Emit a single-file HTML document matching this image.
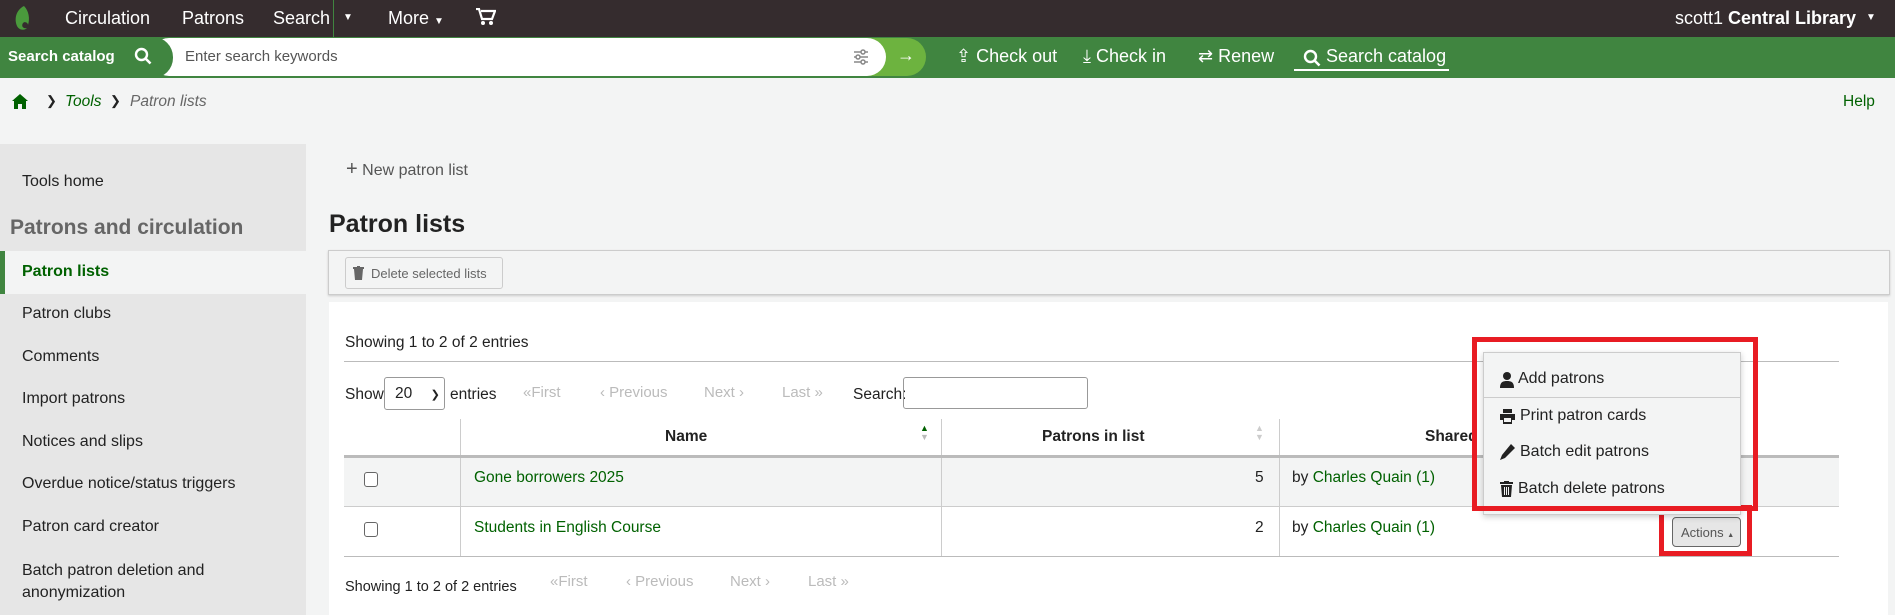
<!DOCTYPE html>
<html><head><meta charset="utf-8"><style>
*{box-sizing:border-box;margin:0;padding:0}
body{width:1895px;height:615px;overflow:hidden;background:#f3f4f4;font-family:"Liberation Sans",sans-serif;color:#222;position:relative;font-size:15.5px}
.a{position:absolute;white-space:nowrap}
.top{left:0;top:0;width:1895px;height:37px;background:#352c2e;color:#fff;font-size:18px}
.gb{left:0;top:37px;width:1895px;height:41px;background:#408540;color:#fff}
.g{color:#006100}
.side{left:0;top:144px;width:306px;height:471px;background:#e6e6e6}
.si{left:22px;font-size:16px;color:#222}
.gray{color:#bbb;font-size:15px}
</style></head><body>
<div class="a top">
 <svg class="a" style="left:12px;top:5px" width="20" height="26" viewBox="0 0 20 26"><path d="M12 1C4 5 2 14 5 21c2 4 7 5 10 2-4 1-6-2-4-5 2-2 5 0 5 2 2-6 1-14-4-19z" fill="#4a9a3c"/></svg>
 <span class="a" style="left:65px;top:8px">Circulation</span>
 <span class="a" style="left:182px;top:8px">Patrons</span>
 <span class="a" style="left:273px;top:8px">Search</span>
 <div class="a" style="left:333px;top:0;width:1px;height:37px;background:#408540"></div>
 <span class="a" style="left:343px;top:12px;font-size:10px">▼</span>
 <span class="a" style="left:388px;top:8px">More <span style="font-size:10px">▼</span></span>
 <svg class="a" style="left:476px;top:8px" width="20" height="18" viewBox="0 0 20 18"><path d="M0 1h3l3 10h10l3-8H5" fill="none" stroke="#fff" stroke-width="2.2"/><circle cx="7" cy="15" r="2" fill="#fff"/><circle cx="15" cy="15" r="2" fill="#fff"/></svg>
 <span class="a" style="left:1675px;top:8px">scott1 <b>Central Library</b></span>
 <span class="a" style="left:1866px;top:12px;font-size:10px">▼</span>
</div>
<div class="a gb">
 <div class="a" style="left:860px;top:1px;width:66px;height:38px;background:#6db33f;border-radius:0 19px 19px 0"></div>
 <div class="a" style="left:150px;top:1px;width:736px;height:38px;background:#fff;border-radius:19px"></div>
 <div class="a" style="left:0;top:0;width:173px;height:41px;background:#408540;border-radius:0 20px 20px 0"></div>
 <span class="a" style="left:8px;top:11px;font-weight:bold;font-size:15px">Search catalog</span>
 <svg class="a" style="left:134px;top:10px" width="18" height="18" viewBox="0 0 18 18"><circle cx="7.5" cy="7.5" r="5.5" fill="none" stroke="#fff" stroke-width="2.4"/><path d="M11.5 11.5l5 5" stroke="#fff" stroke-width="2.6"/></svg>
 <span class="a" style="left:185px;top:11px;color:#555;font-size:15px">Enter search keywords</span>
 <svg class="a" style="left:853px;top:12px" width="16" height="16" viewBox="0 0 16 16" stroke="#888" stroke-width="1.5"><path d="M1 3h14M1 8h14M1 13h14"/><circle cx="10" cy="3" r="2" fill="#fff"/><circle cx="5" cy="8" r="2" fill="#fff"/><circle cx="10" cy="13" r="2" fill="#fff"/></svg>
 <span class="a" style="left:897px;top:8px;font-size:18px;font-weight:bold">→</span>
 <span class="a" style="left:956px;top:9px;font-size:18px">⇪ Check out</span>
 <span class="a" style="left:1083px;top:9px;font-size:18px">⤓ Check in</span>
 <span class="a" style="left:1198px;top:9px;font-size:18px">⇄ Renew</span>
 <svg class="a" style="left:1303px;top:12px" width="18" height="18" viewBox="0 0 18 18"><circle cx="7.5" cy="7.5" r="5.5" fill="none" stroke="#fff" stroke-width="2.4"/><path d="M11.5 11.5l5 5" stroke="#fff" stroke-width="2.6"/></svg>
 <span class="a" style="left:1326px;top:9px;font-size:18px">Search catalog</span>
 <div class="a" style="left:1294px;top:32px;width:155px;height:2px;background:#fff"></div>
</div>
<svg class="a" style="left:12px;top:94px" width="16" height="15" viewBox="0 0 16 15"><path d="M8 0L0 7h2v8h4v-5h4v5h4V7h2z" fill="#006100"/></svg>
<span class="a" style="left:46px;top:93px;font-size:13px">❯</span>
<span class="a g" style="left:65px;top:93px;font-style:italic">Tools</span>
<span class="a" style="left:110px;top:93px;font-size:13px">❯</span>
<span class="a" style="left:130px;top:93px;font-style:italic;color:#666">Patron lists</span>
<span class="a g" style="left:1843px;top:93px">Help</span>

<div class="a side"></div>
<span class="a si" style="top:173px">Tools home</span>
<span class="a" style="left:10px;top:216px;font-size:21px;font-weight:bold;color:#666">Patrons and circulation</span>
<div class="a" style="left:0;top:251px;width:306px;height:43px;background:#f3f4f4;border-left:5px solid #408540"></div>
<span class="a si" style="top:263px;font-weight:bold;color:#006100">Patron lists</span>
<span class="a si" style="top:305px">Patron clubs</span>
<span class="a si" style="top:348px">Comments</span>
<span class="a si" style="top:390px">Import patrons</span>
<span class="a si" style="top:433px">Notices and slips</span>
<span class="a si" style="top:475px">Overdue notice/status triggers</span>
<span class="a si" style="top:518px">Patron card creator</span>
<span class="a si" style="top:560px;line-height:22px">Batch patron deletion and<br>anonymization</span>

<span class="a" style="left:346px;top:161px;font-size:16px;color:#555"><span style="font-size:20px;line-height:16px">+</span> New patron list</span>
<span class="a" style="left:329px;top:210px;font-size:25px;font-weight:bold">Patron lists</span>
<div class="a" style="left:328px;top:250px;width:1562px;height:45px;background:#f3f4f4;border:1px solid #ccc;box-shadow:0 1px 2px #ccc"></div>
<div class="a" style="left:345px;top:257px;width:158px;height:32px;border:1px solid #ccc;border-radius:3px;color:#666;font-size:13px;padding:8px 0 0 25px">Delete selected lists</div>
<svg class="a" style="left:353px;top:266px" width="11" height="14" viewBox="0 0 11 14"><path d="M0 1h11v2H0zM4 0h3v1H4zM1 3h9l-1 11H2z" fill="#666"/></svg>

<div class="a" style="left:329px;top:302px;width:1559px;height:313px;background:#fff"></div>
<span class="a" style="left:345px;top:334px">Showing 1 to 2 of 2 entries</span>
<div class="a" style="left:344px;top:361px;width:1495px;height:1px;background:#bbb"></div>
<span class="a" style="left:345px;top:386px">Show</span>
<div class="a" style="left:384px;top:377px;width:61px;height:33px;border:1px solid #999;border-radius:3px;padding:7px 0 0 10px">20 <span style="margin-left:14px;font-size:11px">❯</span></div>
<span class="a" style="left:450px;top:386px">entries</span>
<span class="a gray" style="left:523px;top:384px">«First</span>
<span class="a gray" style="left:600px;top:384px">‹ Previous</span>
<span class="a gray" style="left:704px;top:384px">Next ›</span>
<span class="a gray" style="left:782px;top:384px">Last »</span>
<span class="a" style="left:853px;top:386px">Search:</span>
<div class="a" style="left:903px;top:377px;width:185px;height:32px;border:1px solid #999;border-radius:3px"></div>

<div class="a" style="left:460px;top:419px;width:1px;height:138px;background:#ccc"></div>
<div class="a" style="left:941px;top:419px;width:1px;height:138px;background:#ccc"></div>
<div class="a" style="left:1279px;top:419px;width:1px;height:138px;background:#ccc"></div>
<span class="a" style="left:665px;top:428px;font-weight:bold">Name</span>
<span class="a" style="left:920px;top:424px;font-size:9px;line-height:9px;color:#006100">▲<br><span style="color:#bbb">▼</span></span>
<span class="a" style="left:1042px;top:428px;font-weight:bold">Patrons in list</span>
<span class="a" style="left:1255px;top:424px;font-size:9px;line-height:9px;color:#ccc">▲<br>▼</span>
<span class="a" style="left:1425px;top:428px;font-weight:bold">Shared</span>
<div class="a" style="left:344px;top:455px;width:1495px;height:3px;background:#bbb"></div>
<div class="a" style="left:344px;top:458px;width:1495px;height:48px;background:#f3f4f4"></div>
<div class="a" style="left:460px;top:458px;width:1px;height:99px;background:#ccc"></div>
<div class="a" style="left:941px;top:458px;width:1px;height:99px;background:#ccc"></div>
<div class="a" style="left:1279px;top:458px;width:1px;height:99px;background:#ccc"></div>
<div class="a" style="left:344px;top:506px;width:1495px;height:1px;background:#ccc"></div>
<div class="a" style="left:344px;top:556px;width:1495px;height:1px;background:#bbb"></div>
<div class="a" style="left:364px;top:472px;width:14px;height:15px;border:1.5px solid #666;border-radius:3px;background:#fff"></div>
<div class="a" style="left:364px;top:522px;width:14px;height:15px;border:1.5px solid #666;border-radius:3px;background:#fff"></div>
<span class="a g" style="left:474px;top:469px">Gone borrowers 2025</span>
<span class="a g" style="left:474px;top:519px">Students in English Course</span>
<span class="a" style="left:1255px;top:469px">5</span>
<span class="a" style="left:1255px;top:519px">2</span>
<span class="a" style="left:1292px;top:469px">by <span class="g">Charles Quain (1)</span></span>
<span class="a" style="left:1292px;top:519px">by <span class="g">Charles Quain (1)</span></span>
<span class="a" style="left:345px;top:579px;font-size:14.5px">Showing 1 to 2 of 2 entries</span>
<span class="a gray" style="left:550px;top:573px">«First</span>
<span class="a gray" style="left:626px;top:573px">‹ Previous</span>
<span class="a gray" style="left:730px;top:573px">Next ›</span>
<span class="a gray" style="left:808px;top:573px">Last »</span>

<div class="a" style="left:1672px;top:517px;width:69px;height:30px;background:#e6e6e6;border:1px solid #666;border-radius:4px;font-size:13px;color:#555;padding:7px 0 0 8px">Actions <span style="font-size:7px">▲</span></div>
<div class="a" style="left:1659px;top:505px;width:93px;height:51px;border:5px solid #e81c23"></div>
<div class="a" style="left:1483px;top:352px;width:258px;height:163px;background:#f3f4f4;border:1px solid #ccc;box-shadow:0 2px 6px rgba(0,0,0,.2)"></div>
<div class="a" style="left:1483px;top:397px;width:258px;height:1px;background:#ccc"></div>
<span class="a" style="left:1518px;top:370px;font-size:16px">Add patrons</span>
<span class="a" style="left:1520px;top:407px;font-size:16px">Print patron cards</span>
<span class="a" style="left:1520px;top:443px;font-size:16px">Batch edit patrons</span>
<span class="a" style="left:1518px;top:480px;font-size:16px">Batch delete patrons</span>
<svg class="a" style="left:1500px;top:372px" width="14" height="16" viewBox="0 0 14 16"><circle cx="7" cy="4" r="4" fill="#222"/><path d="M0 16c0-6 3-7 7-7s7 1 7 7z" fill="#222"/></svg>
<svg class="a" style="left:1500px;top:409px" width="15" height="15" viewBox="0 0 15 15"><path d="M3 0h9v4H3zM0 5h15v6h-3v4H3v-4H0z" fill="#222"/><rect x="4" y="9" width="7" height="4" fill="#f3f4f4"/></svg>
<svg class="a" style="left:1500px;top:444px" width="15" height="16" viewBox="0 0 15 16"><path d="M11 0l4 4-10 10-5 2 2-5z" fill="#222"/></svg>
<svg class="a" style="left:1500px;top:481px" width="13" height="16" viewBox="0 0 13 16"><path d="M0 1h13v2H0zM4 0h5v1H4zM1 4h11l-1 12H2z" fill="#222"/><path d="M4.5 6v8M6.5 6v8M8.5 6v8" stroke="#f3f4f4"/></svg>
<div class="a" style="left:1472px;top:337px;width:286px;height:174px;border:5px solid #e81c23"></div>
</body></html>
